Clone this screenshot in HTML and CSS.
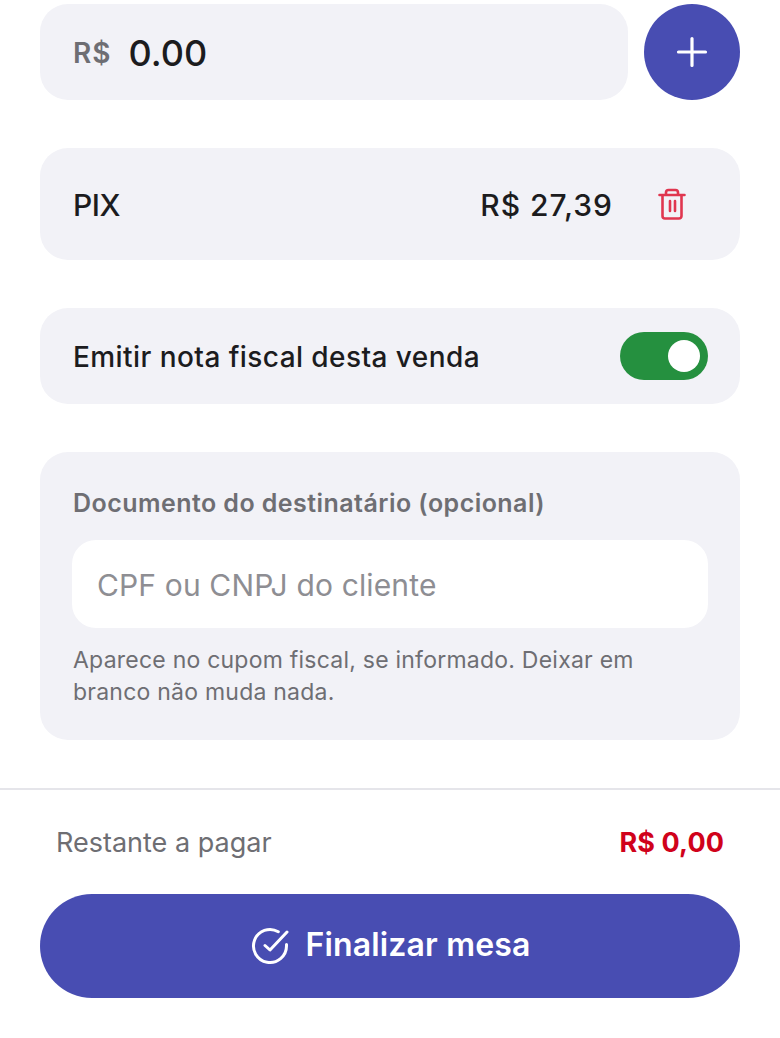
FILE: index.html
```html
<!DOCTYPE html>
<html lang="pt-BR">
<head>
<meta charset="utf-8">
<title>Finalizar mesa</title>
<link rel="stylesheet" href="styles.css">
</head>
<body>
<main class="content">
  <div class="amount-row">
    <div class="amount-field">
      <span class="currency">R$</span>
      <span class="amount">0.00</span>
    </div>
    <button class="add-btn" aria-label="Adicionar">
      <svg width="32" height="32" viewBox="0 0 32 32" fill="none" stroke="#fff" stroke-width="3.2" stroke-linecap="round"><path d="M16 2.5v27M2.5 16h27"/></svg>
    </button>
  </div>
  <div class="card pay-card">
    <span class="pay-name">PIX</span>
    <span class="pay-value">R$ 27,39</span>
    <svg class="trash" width="28" height="32" viewBox="0 0 28 32" fill="none" stroke="#e0364f" stroke-width="2.6" stroke-linecap="round" stroke-linejoin="round"><path d="M1.5 7h25M4.5 7v21a2.5 2.5 0 0 0 2.5 2.5h14a2.5 2.5 0 0 0 2.5-2.5V7M8 7V4.5A2.5 2.5 0 0 1 10.5 2h7A2.5 2.5 0 0 1 20 4.5V7M12 13v10M17 13v10"/></svg>
  </div>
  <div class="card toggle-card">
    <span class="toggle-label">Emitir nota fiscal desta venda</span>
    <span class="toggle"><span class="knob"></span></span>
  </div>
  <div class="card doc-card">
    <label class="doc-label">Documento do destinatário (opcional)</label>
    <div class="doc-input"><span class="doc-placeholder">CPF ou CNPJ do cliente</span></div>
    <p class="doc-help">Aparece no cupom fiscal, se informado. Deixar em branco não muda nada.</p>
  </div>
</main>
<footer class="footer">
  <div class="remaining">
    <span class="remaining-label">Restante a pagar</span>
    <span class="remaining-value">R$ 0,00</span>
  </div>
  <button class="finish-btn">
    <svg width="40" height="40" viewBox="0 0 40 40" fill="none" stroke="#fff" stroke-width="3" stroke-linecap="round" stroke-linejoin="round"><path d="M36.5 18.5V20A16.5 16.5 0 1 1 28.3 5.7M37 6 20 24l-5-4.5"/></svg>
    <span class="finish-text">Finalizar mesa</span>
  </button>
</footer>
</body>
</html>
```
FILE: styles.css
```css
* { box-sizing: border-box; }
html, body { margin: 0; padding: 0; }
body {
  width: 780px;
  height: 1038px;
  overflow: hidden;
  background: #fff;
  font-family: Inter, "Liberation Sans", sans-serif;
  color: #1c1c1e;
}
.content {
  height: 788px;
  padding: 4px 40px 0;
  display: flex;
  flex-direction: column;
  gap: 48px;
}
.amount-row { display: flex; gap: 16px; height: 96px; }
.amount-field {
  flex: 1;
  display: flex;
  align-items: center;
  gap: 18px;
  padding: 2px 32px 0 33px;
  background: #f2f2f7;
  border-radius: 28px;
}
.currency { font-size: 28px; font-weight: 600; color: #6e6e73; letter-spacing: 1px; }
.amount { font-size: 36px; font-weight: 500; color: #1c1c1e; margin-left: -1px; }
.add-btn {
  width: 96px;
  height: 96px;
  border: 0;
  padding: 0;
  border-radius: 50%;
  background: #484db2;
  display: flex;
  align-items: center;
  justify-content: center;
}
.card { background: #f2f2f7; border-radius: 28px; padding: 0 32px; }
.pay-card { height: 112px; display: flex; align-items: center; }
.pay-name { font-size: 30px; font-weight: 550; letter-spacing: -0.5px; flex: 1; padding: 2px 0 0 1px; }
.pay-value { font-size: 30px; font-weight: 550; letter-spacing: 1px; padding-top: 2px; }
.trash { margin: 0 22px 0 45px; }
.toggle-card { height: 96px; display: flex; align-items: center; justify-content: space-between; }
.toggle-label { font-size: 28px; font-weight: 450; letter-spacing: 0.43px; padding: 2px 0 0 1px; }
.toggle {
  width: 88px;
  height: 48px;
  border-radius: 24px;
  background: #25903f;
  display: flex;
  align-items: center;
  justify-content: flex-end;
  padding-right: 8px;
}
.knob { width: 32px; height: 32px; border-radius: 50%; background: #fff; }
.doc-card { height: 288px; padding-top: 34px; display: flex; flex-direction: column; }
.doc-label { font-size: 25px; line-height: 34px; font-weight: 600; color: #6e6e73; letter-spacing: 0.45px; padding-left: 1px; }
.doc-input {
  margin-top: 20px;
  height: 88px;
  background: #fff;
  border-radius: 24px;
  padding: 2px 24px 0 25px;
  display: flex;
  align-items: center;
  font-size: 30px;
  color: #8e8e93;
}
.doc-placeholder { letter-spacing: 0.14px; }
.doc-help { margin: 16px 0 0; padding-left: 1px; font-size: 23px; line-height: 32px; letter-spacing: 0.23px; color: #6e6e73; }
.footer { border-top: 2px solid #e5e5ea; padding: 0 40px; }
.remaining {
  display: flex;
  justify-content: space-between;
  align-items: center;
  padding: 0 16px;
  height: 104px;
}
.remaining-label { font-size: 27px; color: #6e6e73; }
.remaining-value { font-size: 27px; font-weight: 700; letter-spacing: 0.1px; color: #d0021b; padding-top: 1px; }
.finish-btn {
  width: 100%;
  height: 104px;
  border: 0;
  padding: 0;
  border-radius: 52px;
  background: #484db2;
  color: #fff;
  font: 600 32px Inter, "Liberation Sans", sans-serif;
  letter-spacing: 0.15px;
  display: flex;
  align-items: center;
  justify-content: center;
  gap: 16px;
}
.finish-text { padding-bottom: 4px; }
```
